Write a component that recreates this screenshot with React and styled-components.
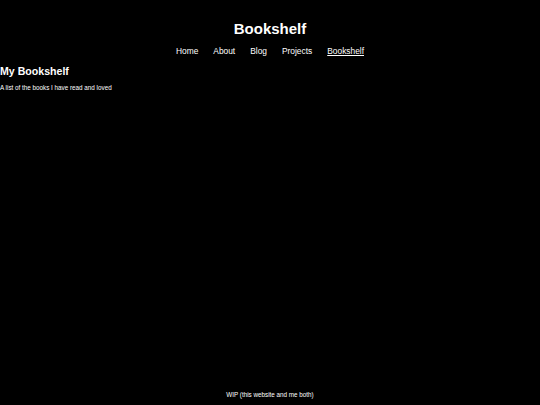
import React from 'react'
import styled, { createGlobalStyle } from 'styled-components'

const GlobalStyle = createGlobalStyle`
    html, body {
        margin: 0;
        padding: 0;
        background: #000;
        color: #fff;
        font-family: "Liberation Sans", Arial, sans-serif;
    }
`

const Page = styled.div`
    min-height: 405px;
    display: flex;
    flex-direction: column;
    box-sizing: border-box;
`

const Header = styled.header`
    display: flex;
    flex-direction: column;
    align-items: center;
    padding-top: 20px;
    h1 {
        margin: 0;
        font-size: 15px;
        line-height: 18px;
        font-weight: 700;
    }
`

const Nav = styled.nav`
    display: flex;
    gap: 15px;
    margin-top: 8px;
    font-size: 8.4px;
    line-height: 10px;
`

const NavLink = styled.a`
    color: #fff;
    text-decoration: ${p => (p.$active ? 'underline' : 'none')};
`

const Main = styled.main`
    flex: 1;
    padding-top: 9px;
    h2 {
        margin: 0;
        font-size: 10.6px;
        line-height: 13px;
        font-weight: 700;
    }
    p {
        margin: 6px 0 0;
        font-size: 6.3px;
        line-height: 8px;
    }
`

const Footer = styled.footer`
    text-align: center;
    font-size: 6.3px;
    line-height: 8px;
    padding-bottom: 6px;
`

const links = ['Home', 'About', 'Blog', 'Projects', 'Bookshelf']

export default function App() {
    return (
        <Page>
            <GlobalStyle />
            <Header>
                <h1>Bookshelf</h1>
                <Nav>
                    {links.map(l => (
                        <NavLink key={l} href="#" $active={l === 'Bookshelf'}>{l}</NavLink>
                    ))}
                </Nav>
            </Header>
            <Main>
                <h2>My Bookshelf</h2>
                <p>A list of the books I have read and loved</p>
            </Main>
            <Footer>WIP (this website and me both)</Footer>
        </Page>
    )
}
